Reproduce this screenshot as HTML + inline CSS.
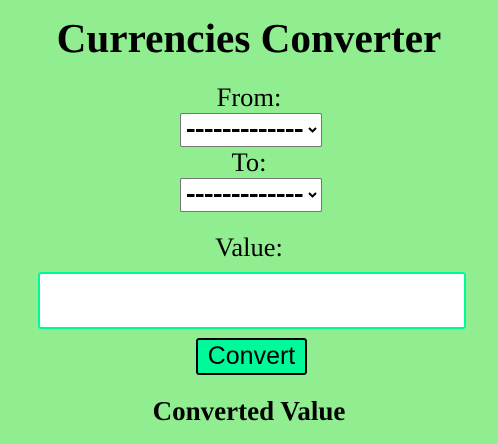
<!DOCTYPE html>
<html><head><meta charset="utf-8"><style>
html,body{margin:0;padding:0;}
body{width:498px;height:444px;background:#90EE90;position:relative;overflow:hidden;font-family:"Liberation Serif",serif;color:#000;}
.c{position:absolute;left:0;width:498px;text-align:center;white-space:nowrap;}
h1{margin:0;font-size:41.2px;font-weight:bold;line-height:40px;top:18px;}
.lab{font-size:26.5px;line-height:27px;}
.sel{position:absolute;left:180px;width:140px;height:32px;background:#fff;border:1px solid #767676;border-radius:2px;box-sizing:content-box;}
.dash{position:absolute;left:6px;top:15px;width:117px;height:3px;background:repeating-linear-gradient(90deg,#000 0 7.5px,transparent 7.5px 9px);}
.sel svg{position:absolute;right:4px;top:13px;}
.inp{position:absolute;left:38px;top:272px;width:424px;height:53px;background:#fff;border:2px solid #00FA9A;border-radius:3px;}
.btn{position:absolute;left:196px;top:338px;width:107px;height:33px;background:#00FA9A;border:2px solid #000;border-radius:3px;font-family:"Liberation Sans",sans-serif;font-size:25px;line-height:33px;text-align:center;}
</style></head><body>
<h1 class="c">Currencies Converter</h1>
<div class="c lab" style="top:84px">From:</div>
<div class="sel" style="top:113px"><div class="dash"></div><svg width="9" height="6" viewBox="0 0 9 6"><path d="M1 1L4.5 4.5L8 1" stroke="#000" stroke-width="2" fill="none"/></svg></div>
<div class="c lab" style="top:149px">To:</div>
<div class="sel" style="top:178px"><div class="dash"></div><svg width="9" height="6" viewBox="0 0 9 6"><path d="M1 1L4.5 4.5L8 1" stroke="#000" stroke-width="2" fill="none"/></svg></div>
<div class="c lab" style="top:234px">Value:</div>
<div class="inp"></div>
<div class="btn">Convert</div>
<div class="c" style="top:397px;font-size:27px;font-weight:bold;line-height:28px;">Converted Value</div>
</body></html>
